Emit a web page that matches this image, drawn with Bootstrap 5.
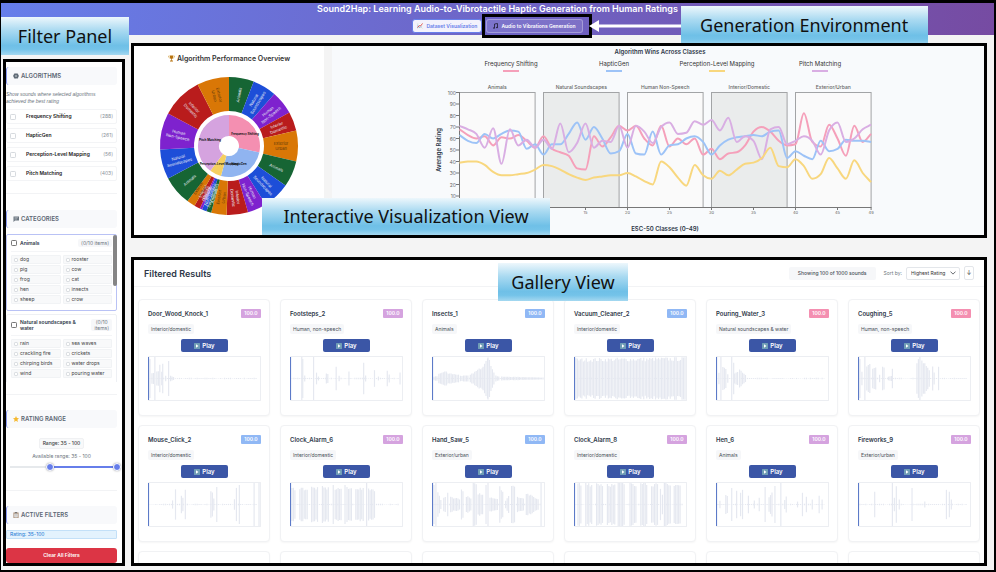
<!DOCTYPE html>
<html lang="en">
<head>
<meta charset="utf-8">
<meta name="viewport" content="width=device-width, initial-scale=1">
<title>Sound2Hap</title>
<link href="https://cdn.jsdelivr.net/npm/bootstrap@5.3.0/dist/css/bootstrap.min.css" rel="stylesheet">
<style>
body{font-family:Inter,"Liberation Sans",sans-serif;font-size:5px;line-height:7px;color:#2d3748;background:#f4f4f4;border:solid #000;border-width:3px 2px 2px 1px}
.frame{border:3px solid #000;background:#fff}
.callout{font-family:"Noto Sans","Open Sans",sans-serif;font-size:18px;line-height:38px;color:#111;text-align:center;white-space:nowrap;background:linear-gradient(#edf7fc,#aadaf1 35%,#6fc0e7 75%,#74c3e9 85%,#a5d8f0)}
.topbar{background:linear-gradient(100deg,#667eea,#764ba2)}
.topbar h1{font-size:9px;line-height:11px;font-weight:600;color:#fff}
.tabs-row{margin-bottom:-3px;padding-left:9px}
.tab-btn{font-size:5px;line-height:7px;font-weight:600;color:#fff;border:1px solid rgba(255,255,255,.3);background:rgba(255,255,255,.1);border-radius:3px;padding:2px 4px;height:14px;gap:3px}
.tab-btn.active{color:#667eea;background:#f3f2fc}
.audio-box{border:3px solid #000;height:24px;padding:0 6px 0 1px}
.audio-box .tab-btn{padding:2px 6px}
.pointer{left:100%;top:-11px}
.pointer .callout{width:247px;line-height:39px}
.layout{padding:0 7px 4px 2px;gap:6px;min-height:0}
.side{width:122px;padding-top:24px}
.side .callout{left:-2px;top:-18px;width:128px}
.side-in{padding:0 5px 0 0}
.sec{padding:15px 0 12px;border-bottom:1px solid #f2f3f5}
.sec:first-child{padding-top:5px}
.sec:last-child{border:0;padding-bottom:0}
.sec h2{font-size:6px;line-height:8px;font-weight:600;color:#5b6673;background:#f8f9fb;border-left:1px solid #8a9af0;border-radius:3px;padding:5px 6px;gap:2px;margin-bottom:6px;height:18px}
.hint{font-family:"Liberation Sans",Arial,sans-serif;font-size:5px;font-style:italic;color:#6c757d;margin:0 0 4px}
.opt{border:1px solid #f3f4f6;border-radius:2px;height:15px;padding:0 3px;color:#222;font-weight:600;gap:10px}
.opt span{color:#8a929a;font-weight:400}
.form-check-input{width:6px;height:6px;margin:0;border:1px solid #d6dade;border-radius:1px;flex:none}
.cats{height:148px;gap:3px}
.cat{border:1px solid #eef0f4;border-radius:2px;padding:4px 4px 6px}
.cat.on{border-color:#b9c2f5}
.cat-h{font-weight:600;min-height:10px;gap:3px;padding-bottom:4px;border-bottom:1px solid #f4f5f7;margin-bottom:3px}
.cat-h .form-check-input{border-color:#777}
.cat-h .name{font-size:5px;line-height:6px}
.count{background:#f6f7f9;border-radius:2px;color:#6c757d;font-weight:400;padding:0 3px;text-align:center;line-height:6px}
.on .count{padding:1px 3px}
.subs{display:grid;grid-template-columns:1fr 1fr;gap:1px 2px}
.subs label{background:#f8f9fa;border:1px solid #f1f3f5;border-radius:1px;height:9px;padding:0 2px;gap:2px;color:#444}
.subs .form-check-input{width:4px;height:4px}
.thumb-bar{right:0;top:1px;width:4px;height:51px;border-radius:2px;background:#858585}
.pill{background:#f8f9fa;border:1px solid #f0f1f3;border-radius:2px;padding:1px 3px;color:#444;font-weight:500}
.ranges{display:grid;margin:2px -4px 6px 4px;height:10px;background:linear-gradient(90deg,#e6e9ec 36%,#667eea 36%) 0 4px/106px 2px no-repeat}
.ranges input{grid-area:1/1;appearance:none;-webkit-appearance:none;background:none;width:100%;height:10px;margin:0;pointer-events:none}
.ranges input::-webkit-slider-thumb{-webkit-appearance:none;pointer-events:auto;width:8px;height:8px;border-radius:50%;background:#667eea;border:1px solid #fff;box-shadow:0 0 2px rgba(0,0,0,.35)}
.active-tag{background:#e3f2fd;border:1px solid #c3e0f8;color:#1976d2;padding:0 3px;border-radius:1px;height:9px}
.clear{background:#dc3545;color:#fff;font-size:5px;line-height:7px;font-weight:600;padding:4px;border:0;border-radius:3px;margin-top:9px}
.clear:hover{background:#bb2d3b;color:#fff}
.content{padding-top:8px;gap:19px}
.viz{background:#f4f4f4;gap:8px}
.viz .callout{left:128px;bottom:0;width:288px;line-height:37px}
.pie-card{width:190px;background:#fff;padding-top:8px}
.pie-card h2{font-size:7px;line-height:9px;font-weight:600;margin-bottom:13px;gap:2px;color:#333}
.chart-card{background:#f8fafc;min-width:0}
svg{display:block}
.chart-card svg{width:100%;height:189px}
svg text{font-family:Inter,"Liberation Sans",sans-serif}
.gallery{min-height:0}
.gallery .callout{left:364px;top:3px;width:130px;z-index:2}
.g-head{height:27px;padding:0 10px;border-bottom:1px solid #f2f3f5}
.g-head h2{font-size:9px;line-height:11px;font-weight:600;color:#2d3748}
.showing{background:#f6f7f9;border-radius:2px;padding:3px 9px;color:#495057;font-weight:500}
.sort{font-size:5px;line-height:7px;height:13px;width:54px;padding:0 12px 0 4px;border:1px solid #e3e6ea;border-radius:2px;color:#333;background-size:6px;background-position:right 3px center}
.dir{font-size:6px;line-height:8px;width:10px;height:14px;padding:0;border:1px solid #e3e6ea;border-radius:2px;background:#fff;color:#333}
.grid-in{margin:12px 4px 0;display:grid;grid-template-columns:repeat(6,minmax(0,1fr));gap:9px 10px}
.snd{border:1px solid #f1f2f4;border-radius:4px;padding:9px 8px 9px 9px;height:117px;box-shadow:0 1px 2px rgba(0,0,0,.04);background:#fff}
.snd h3{font-size:6px;line-height:9px;font-weight:600;margin:0;color:#2d3748}
.score{font-size:5px;line-height:9px;font-weight:600;color:#fff;border-radius:1px;width:20px;text-align:center}
.pink{background:#f48fb1}.sky{background:#90b8f5}.plum{background:#d5a3df}
.tag{background:#f6f7f9;border-radius:2px;padding:1px 3px;height:10px;line-height:8px;color:#495057;margin:6px 0 5px;align-self:flex-start}
.play{width:47px;height:13px;background:#3b56a6;color:#fff;border:0;border-radius:2px;font-size:6px;line-height:8px;font-weight:600;padding:0;gap:2px;align-self:center}
.wave{border:1px solid #eceef2;border-left:0;border-radius:1px;margin-top:4px;height:45px}
.wave svg{width:100%;height:100%}
</style>
</head>
<body class="vh-100 d-flex flex-column overflow-hidden">
<header class="topbar text-center">
  <h1 class="m-0">Sound2Hap: Learning Audio-to-Vibrotactile Haptic Generation from Human Ratings</h1>
  <div class="tabs-row d-flex justify-content-center align-items-center">
    <button class="btn tab-btn active d-flex align-items-center" type="button"><svg width="6" height="6" viewBox="0 0 12 12"><rect width="12" height="12" fill="#fff" stroke="#ccc"/><path d="M2 3v7M5 7v3M8 5v5" stroke="#7aa6c8" stroke-width="1.5"/><path d="M1 9l4-4 2 1 4-5" fill="none" stroke="#d33" stroke-width="1.6"/></svg>Dataset Visualization</button>
    <div class="audio-box position-relative d-flex align-items-center">
      <button class="btn tab-btn d-flex align-items-center" type="button"><svg width="5" height="6" viewBox="0 0 10 12"><path d="M3 10V2l6-1v8" fill="none" stroke="#262340" stroke-width="1.8"/><ellipse cx="2" cy="10" rx="2" ry="1.6" fill="#262340"/><ellipse cx="8" cy="9" rx="2" ry="1.6" fill="#262340"/></svg>Audio to Vibrations Generation</button>
      <div class="pointer position-absolute d-flex align-items-center">
        <svg width="92" height="12" viewBox="0 0 92 12"><path d="M0 6l10-6v4.500h82v3H10V12z" fill="#fff"/></svg>
        <div class="callout">Generation Environment</div>
      </div>
    </div>
  </div>
</header>

<main class="layout d-flex flex-grow-1">
  <aside class="side flex-shrink-0 position-relative d-flex flex-column">
    <div class="callout position-absolute">Filter Panel</div>
    <div class="frame flex-grow-1 overflow-hidden"><div class="side-in">
      <section class="sec">
        <h2 class="d-flex align-items-center"><svg width="6" height="6" viewBox="0 0 12 12"><path d="M6 0l1.500 1.500 2.500-.5.5 2.500L12 6l-1.500 2-.5 3-3-.5L6 12l-1.500-1.500L2 11l-.5-3L0 6l1.500-2.500L2 1l2.500.5z" fill="#606b76"/><circle cx="6" cy="6" r="2" fill="#a9b1b9"/></svg>ALGORITHMS</h2>
        <p class="hint">Show sounds where selected algorithms<br>achieved the best rating</p>
        <div id="algos" class="d-flex flex-column gap-1"></div>
      </section>
      <section class="sec pt-3">
        <h2 class="d-flex align-items-center"><svg width="6" height="6" viewBox="0 0 12 12"><path d="M1 1h11v8H4l-3 3z" fill="#69747f"/><path d="M3 3.500h7M3 6h5" stroke="#dfe3e7"/></svg>CATEGORIES</h2>
        <div class="cats d-flex flex-column overflow-hidden position-relative" id="cats"><div class="thumb-bar position-absolute"></div></div>
      </section>
      <section class="sec">
        <h2 class="d-flex align-items-center"><svg width="6" height="6" viewBox="0 0 12 12"><path d="M6 0l1.800 4 4.200.4-3.200 3 1 4.400L6 9.500l-3.800 2.300 1-4.400L0 4.400 4.200 4z" fill="#f5b82e"/></svg>RATING RANGE</h2>
        <div class="d-flex flex-column align-items-center gap-1 pt-1"><span class="pill">Range: 35 - 100</span><span class="text-secondary">Available range: 35 - 100</span></div>
        <div class="ranges"><input type="range" value="35" aria-label="Lowest rating"><input type="range" value="100" aria-label="Highest rating"></div>
      </section>
      <section class="sec">
        <h2 class="d-flex align-items-center"><svg width="6" height="6" viewBox="0 0 12 12"><rect x="1" y="1" width="10" height="11" fill="#9a7d62"/><rect x="2.500" y="3" width="7" height="8" fill="#eee"/><rect x="4" width="4" height="2.500" fill="#777"/><path d="M3.500 5.500h5M3.500 8h5" stroke="#999"/></svg>ACTIVE FILTERS</h2>
        <div class="active-tag">Rating: 35-100</div>
        <button class="btn clear w-100" type="button">Clear All Filters</button>
      </section>
    </div></div>
  </aside>

  <div class="content d-flex flex-column flex-grow-1">
    <section class="frame viz d-flex position-relative flex-shrink-0">
      <div class="pie-card flex-shrink-0 d-flex flex-column align-items-center">
        <h2 class="d-flex align-items-center"><svg width="7" height="7" viewBox="0 0 14 14"><path d="M4 1h6v4a3 3 0 01-6 0zM6.300 8h1.400v3H6.300zM4 11h6v2H4z" fill="#b8720c"/><path d="M4 2H1c0 3 1 4 3 4M10 2h3c0 3-1 4-3 4" fill="none" stroke="#c98a1a"/></svg>Algorithm Performance Overview</h2>
        <svg id="pie" width="140" height="140" viewBox="-70 -70 140 140" role="img" aria-label="Algorithm performance"></svg>
      </div>
      <div class="chart-card flex-grow-1"><svg id="lines" viewBox="0 0 652 189" role="img" aria-label="Algorithm wins across classes"></svg></div>
      <div class="callout position-absolute">Interactive Visualization View</div>
    </section>
    <section class="frame gallery position-relative flex-grow-1 overflow-hidden">
      <div class="callout position-absolute">Gallery View</div>
      <div class="g-head d-flex align-items-center justify-content-between">
        <h2 class="m-0">Filtered Results</h2>
        <div class="d-flex align-items-center">
          <span class="showing me-2">Showing 100 of 1000 sounds</span>
          <label for="sort" class="text-secondary me-1">Sort by:</label>
          <select id="sort" class="form-select sort me-1"><option>Highest Rating</option></select>
          <button class="dir" type="button" aria-label="Sort descending">↓</button>
        </div>
      </div>
      <div id="grid" class="grid-in"></div>
    </section>
  </div>
</main>

<script src="https://cdn.jsdelivr.net/npm/bootstrap@5.3.0/dist/js/bootstrap.bundle.min.js"></script>
<script>
const $ = id => document.getElementById(id);

/* filter panel */
$('algos').innerHTML = [['Frequency Shifting',288],['HapticGen',261],['Perception-Level Mapping',56],['Pitch Matching',403]]
  .map(([n,c]) => `<label class="opt d-flex align-items-center"><input class="form-check-input" type="checkbox">${n}<span class="ms-auto">(${c})</span></label>`).join('');
const cats = [['Animals',['dog','rooster','pig','cow','frog','cat','hen','insects','sheep','crow'],'on'],
  ['Natural soundscapes &amp; water',['rain','sea waves','crackling fire','crickets','chirping birds','water drops','wind','pouring water'],'']];
$('cats').insertAdjacentHTML('afterbegin', cats.map(([n,s,c]) => `<div class="cat ${c}"><label class="cat-h d-flex align-items-center"><input class="form-check-input" type="checkbox"><span class="name flex-grow-1">${n}</span><span class="count">${c ? '(0/10 items)' : '(0/10<br>items)'}</span></label><div class="subs">${
  s.map(x => `<label class="d-flex align-items-center"><input class="form-check-input" type="checkbox">${x}</label>`).join('')}</div></div>`).join(''));

/* sunburst */
const pt = (r,a) => { a *= Math.PI/180; return (r*Math.sin(a)).toFixed(2)+' '+(-r*Math.cos(a)).toFixed(2); };
const arc = (r0,r1,a,b,f) => `<path fill="${f}" d="M${pt(r1,a)}A${r1} ${r1} 0 ${b-a>180?1:0} 1 ${pt(r1,b)}L${pt(r0,b)}A${r0} ${r0} 0 ${b-a>180?1:0} 0 ${pt(r0,a)}z"/>`;
const kinds = {A:['#166534',['Animals']],N:['#1d4ed8',['Natural','Soundscapes']],H:['#7e22ce',['Human','Non-Speech']],I:['#b91c1c',['Interior','Domestic']],E:['#d97706',['Exterior','Urban']]};
const ring = 'A21 N41 H61 I77 E103 A125 N148 H164 I182 E195 A199 N203 H205 I210 E217 A242 N267 H298 I333 E360'.split(' ');
let from = 0, shapes = '', labels = '';
ring.forEach(s => {
  const to = +s.slice(1), [f,t] = kinds[s[0]], m = (from+to)/2, [x,y] = pt(52,m).split(' ');
  shapes += arc(35,69,from,to,f);
  labels += `<g transform="translate(${x} ${y}) rotate(${m>180?m+90:m-90})" fill="${s[0]=='E'?'#5f3a0c':'#e8ecf5'}">` +
    t.map((w,i) => `<text y="${t.length>1 ? (i?4:-1) : 2}">${w}</text>`).join('')+'</g>';
  from = to;
});
shapes += arc(10,31,0,102,'#f48fb1')+arc(10,31,102,195,'#90b4f0')+arc(10,31,195,217,'#f5cf60')+arc(10,31,217,360,'#d5a3df');
const inner = [['Frequency Shifting',16,-11],['Pitch Matching',-19,-5],['Perception-Level Mapping',-10,19],['HapticGen',10,19]];
$('pie').innerHTML = shapes+`<g font-size="4" text-anchor="middle">${labels}</g><g font-size="3" font-weight="700" fill="#111" text-anchor="middle">${
  inner.map(([t,x,y]) => `<text x="${x}" y="${y}">${t}</text>`).join('')}</g>`;

/* line chart */
const X = k => 127.5+8.4*k, Y = v => 161.5-1.15*v;
const series = {
 '#f5a0ba':[68,63,60,62,54,61,60,63,58,52,62,51,48,45,34,33,62,53,61,71,67,71,60,54,71,53,60,55,60,46,51,42,47,48,54,66,70,66,58,54,55,82,57,53,72,60,45,71,57,64],
 '#9dc3f7':[63,58,56,64,60,64,67,66,51,55,46,55,55,64,74,59,70,60,47,49,64,47,46,66,46,54,55,60,62,57,46,54,59,61,62,63,62,66,67,43,49,45,42,58,49,51,59,58,58,57],
 '#d9aee3':[71,68,64,52,69,38,68,54,59,52,59,51,73,48,56,73,52,58,57,71,52,71,66,56,70,74,64,65,75,72,76,67,78,57,62,58,42,68,70,55,58,62,58,46,67,74,57,60,68,72],
 '#f8d77e':[39,40,40,37,31,28,28,29,30,33,37,36,33,29,26,24,26,27,28,28,30,27,23,20,40,35,26,19,37,28,25,32,28,33,38,39,43,52,36,35,42,36,25,29,43,34,25,41,30,22]};
function monotone(v){
  const d = v.slice(1).map((y,i) => y-v[i]);
  const m = v.map((_,i) => i==0 ? d[0] : i==v.length-1 ? d[i-1] : d[i-1]*d[i]<=0 ? 0 : Math.sign(d[i])*Math.min(Math.abs(d[i-1]),Math.abs(d[i]),Math.abs(d[i-1]+d[i])/4)*2);
  let p = `M${X(0)} ${Y(v[0])}`;
  for(let i=0;i<v.length-1;i++) p += `C${X(i+1/3)} ${Y(v[i]+m[i]/3)} ${X(i+2/3)} ${Y(v[i+1]-m[i+1]/3)} ${X(i+1)} ${Y(v[i+1])}`;
  return p;
}
let c = `<text x="328" y="8" text-anchor="middle" font-size="6" font-weight="600" fill="#2d3748">Algorithm Wins Across Classes</text>`;
[['Frequency Shifting','#f5a0ba'],['HapticGen','#9dc3f7'],['Perception-Level Mapping','#f8d77e'],['Pitch Matching','#d9aee3']].forEach(([t,f],i) => {
  const x = 179+103*i;
  c += `<text x="${x}" y="20" text-anchor="middle" font-size="6" font-weight="400" fill="#333">${t}</text><path d="M${x-8} 25h16" stroke="${f}" stroke-width="2"/>`;
});
['Animals','Natural Soundscapes','Human Non-Speech','Interior/Domestic','Exterior/Urban'].forEach((t,i) => {
  c += `<rect x="${X(i*10)}" y="46.500" width="75.600" height="115" fill="${i%2?'#eaecec':'#fafafa'}" stroke="#a2a4a6"/><text x="${X(i*10+4.5)}" y="43" text-anchor="middle" font-size="5" font-weight="500" fill="#666">${t}</text>`;
});
c += `<path d="M127.500 46v115.500H539" fill="none" stroke="#777"/>`;
for(let v=10;v<=100;v+=10) c += `<path d="M124 ${Y(v)}h4" stroke="#777"/><text x="124" y="${Y(v)+2}" text-anchor="end" font-size="5" fill="#666">${v}</text>`;
[15,20,25,30,35,40,45,49].forEach(k => c += `<path d="M${X(k)} 161v3" stroke="#777"/><text x="${X(k)}" y="168" text-anchor="middle" font-size="4" fill="#666">${k}</text>`);
for(const f in series) c += `<path d="${monotone(series[f])}" fill="none" stroke="${f}" stroke-width="2"/>`;
c += `<text x="333" y="185" text-anchor="middle" font-size="6" font-weight="600" fill="#2d3748">ESC-50 Classes (0–49)</text><text transform="translate(109 104) rotate(-90)" text-anchor="middle" font-size="6" font-weight="600" fill="#2d3748">Average Rating</text>`;
$('lines').innerHTML = c;

/* gallery; each wave is a list of runs: start x, end x, start amplitude, end amplitude */
const dm = 'Interior/domestic', hu = 'Human, non-speech', ur = 'Exterior/urban';
const sounds = [
 ['Door_Wood_Knock_1',dm,'plum','1 1 20 20,3 5 6 6,6 6 25 25,8 10 8 8,11 11 14 14,13 13 7 7,14 14 15 15,17 18 3 3,20 20 18 18,22 26 3 1'],
 ['Footsteps_2',hu,'plum','11 11 25 25,12 12 20 20,14 14 3 3,23 23 24 24,26 26 6 6,28 28 2 2,36 38 6 4,46 46 12 12,49 50 3 3,59 60 7 6,74 74 16 16,76 76 3 3,85 86 10 9,89 89 2 2,98 98 8 8,100 100 4 4,111 112 6 4'],
 ['Insects_1','Animals','sky','1 5 2 3,6 14 5 8,14 26 6 4,28 36 3 3,38 50 4 12,51 56 14 25,56 62 22 7,64 68 3 2,70 112 2 1'],
 ['Vacuum_Cleaner_2',dm,'sky','1 112 20 21'],
 ['Pouring_Water_3','Natural soundscapes &amp; water','pink','2 2 6 6,4 4 23 23,6 10 12 11,11 12 5 5,15 15 25 25,17 17 16 16,18 22 5 8,23 29 9 4'],
 ['Coughing_5',hu,'pink','1 1 20 20,3 3 7 7,6 6 22 22,8 12 14 18,14 18 11 11,21 22 4 3,24 26 13 12,30 33 2 3,34 34 10 10,59 61 18 22,62 62 25 25,64 72 20 9,75 77 12 5,81 81 12 12'],
 ['Mouse_Click_2',dm,'sky','24 25 4 10,27 28 17 15,33 35 9 6,37 37 15 15,63 65 14 12,66 67 7 5,69 69 18 18,87 88 6 5,89 89 17 17,92 92 20 20,107 107 25 25,112 112 25 25'],
 ['Clock_Alarm_6',dm,'plum','1 5 17 17,9 17 18 16,21 28 18 17,32 39 18 17,43 43 20 20,45 52 17 17,55 55 20 20,57 62 17 17,66 74 18 16,77 77 25 25,79 85 17 16'],
 ['Hand_Saw_5',ur,'sky','1 1 20 20,3 3 24 24,5 8 14 5,11 13 7 8,15 15 12 12,18 27 8 6,29 31 16 12,34 39 9 6,41 44 22 20,46 51 12 10,54 54 20 20,56 56 25 25,58 66 8 6,68 71 20 14,74 78 4 10,80 84 22 18,86 92 8 7,95 108 12 5,110 110 22 22'],
 ['Clock_Alarm_8',dm,'plum','3 6 23 21,11 17 24 21,22 29 23 21,33 41 22 20,44 51 24 22,56 63 24 21,67 74 25 22,78 85 22 20,87 87 16 16,89 89 10 10,91 97 22 20,101 108 22 20'],
 ['Hen_6','Animals','plum','3 4 4 10,9 11 10 8,15 15 17 17,20 20 14 14,24 24 12 12,26 26 15 15,32 32 9 9,38 38 4 4,43 43 7 7,49 49 18 18,53 56 8 14,59 59 19 19,65 65 25 25,69 71 5 11,82 82 3 3,87 87 12 12,91 91 8 8,97 97 5 5,104 104 9 9,107 107 5 5'],
 ['Fireworks_9',ur,'plum','16 17 13 3,34 34 25 25,36 36 7 7,38 39 22 16,41 41 5 5,54 54 17 17,67 68 3 2,89 89 15 15,92 92 13 13,94 94 5 5']];
let seed = 7;
const rnd = () => (seed = (seed*16807)%2147483647)/2147483647;
const bar = (x,h) => `<path d="M${x} ${22-h}v${2*h}"/>`;
$('grid').innerHTML = sounds.map(([n,t,col,w]) => {
  let s = '';
  for(let x=2;x<112;x+=2) s += bar(x,rnd()*.6+.2);
  w.split(',').forEach(r => { const [a,b,p,q] = r.split(' ').map(Number);
    for(let x=a;x<=b;x+=1.5) s += bar(x+1,Math.min(22,(b>a?p+(q-p)*(x-a)/(b-a):p)*(a==b?1:.85+rnd()*.2))); });
  return `<article class="snd d-flex flex-column"><div class="d-flex justify-content-between"><h3>${n}</h3><span class="score ${col}">100.0</span></div><span class="tag">${t}</span><button type="button" class="play d-flex align-items-center justify-content-center"><svg width="6" height="6" viewBox="0 0 12 12"><rect width="12" height="12" rx="1" fill="#6f9db5"/><path d="M4 2.500l5 3.500-5 3.500z" fill="#fff"/></svg>Play</button><div class="wave"><svg viewBox="0 0 114 44" preserveAspectRatio="none" stroke="#e5e8f0" stroke-width="1.200">${s}<path d="M.5 0v44" stroke="#5c7ac8"/></svg></div></article>`;
}).join('') + '<article class="snd"></article>'.repeat(6);
</script>
</body>
</html>
